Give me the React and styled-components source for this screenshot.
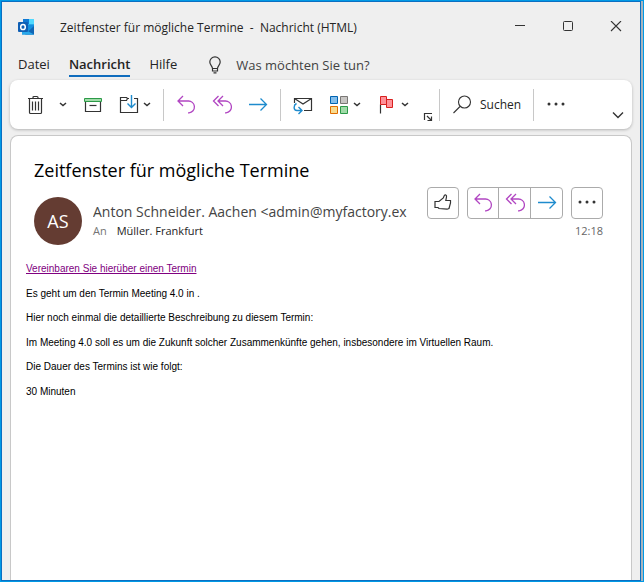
import React from "react";
import styled, { createGlobalStyle } from "styled-components";

const GlobalStyle = createGlobalStyle`
  * {
    box-sizing: border-box;
  }

  body {
    margin: 0;
    font-family: "Open Sans", "Noto Sans", sans-serif;
    color: #242424;
  }

  button {
    font: inherit;
    color: inherit;
    background: none;
    border: none;
    padding: 0;
    cursor: pointer;
  }

  svg {
    display: block;
    fill: none;
  }
`;

const PURPLE = "#b146c2";
const BLUE = "#1e8bcd";
const DARK = "#333333";

const OutlookLogo = () => (
  <svg width="16" height="16" viewBox="0 0 16 16">
    <path d="M5 0h11v10H5z" fill="#28a8ea" />
    <path d="M5 0h6v5H5z" fill="#0f78d4" />
    <path d="M11 0h5v5h-5z" fill="#50d9ff" />
    <path d="M4 6h12v9.5H4z" fill="#1490df" />
    <path d="M16 7v8.5H7z" fill="#1066b5" />
    <path d="M4 9l12 6.5H4z" fill="#28a8ea" />
    <rect y="3" width="10" height="10" rx="1" fill="#0f5fb4" />
    <ellipse cx="5" cy="8" rx="2.3" ry="2.6" stroke="#fff" strokeWidth="1.5" />
  </svg>
);

const BulbIcon = () => (
  <svg width="14" height="18" viewBox="0 0 14 18" stroke={DARK} strokeWidth="1.2">
    <path d="M4.5 12.5C4.5 10 1.8 9 1.8 6a5.2 5.2 0 0 1 10.4 0c0 3-2.7 4-2.7 6.5zM4.5 12.5V15h5v-2.5M5.5 16.8h3" />
  </svg>
);

const TrashIcon = () => (
  <svg width="20" height="20" viewBox="0 0 20 20" stroke={DARK} strokeWidth="1.2">
    <path d="M2 3.5h15M7 3.5v-1q0-1 1-1h3q1 0 1 1v1M3.5 3.5v14q0 1 1 1h10q1 0 1-1v-14M6.5 6.5v9M9.5 6.5v9M12.5 6.5v9" />
  </svg>
);

const ArchiveIcon = () => (
  <svg width="20" height="20" viewBox="0 0 20 20">
    <path d="M2.5 6.5v10h15v-10" stroke={DARK} strokeWidth="1.2" />
    <path d="M1.5 3.5h17v3h-17z" fill="#a0dba8" stroke="#2c9a48" />
    <path d="M6.5 10.5h7" stroke={DARK} strokeWidth="1.2" />
  </svg>
);

const MoveIcon = () => (
  <svg width="20" height="20" viewBox="0 0 20 20">
    <path
      d="M10 3.5H8.500L7.500 2.500h-6v15h17v-14H15M1.500 5.500h6l1-2"
      stroke={DARK}
      strokeWidth="1.2"
    />
    <path d="M12.5 0v12.500M8.500 8.500l4 4 4-4" stroke={BLUE} strokeWidth="1.4" />
  </svg>
);

const ReplyIcon = () => (
  <svg width="20" height="20" viewBox="0 0 20 20" stroke={PURPLE} strokeWidth="1.3">
    <path d="M7 1L2 6l5 5M2 6h10a5.900 5.900 0 0 1 1 11.800h-1" />
  </svg>
);

const ReplyAllIcon = () => (
  <svg width="20" height="20" viewBox="0 0 20 20" stroke={PURPLE} strokeWidth="1.3">
    <path d="M6.500 1l-5 5 5 5M11 1L6 6l5 5M6 6h7a5.900 5.900 0 0 1 1 11.800h-1" />
  </svg>
);

const ForwardIcon = () => (
  <svg width="20" height="20" viewBox="0 0 20 20" stroke={BLUE} strokeWidth="1.3">
    <path d="M1 9.5h17.500M12.500 3.500l6 6-6 6" />
  </svg>
);

const ShareMailIcon = () => (
  <svg width="20" height="20" viewBox="0 0 20 20">
    <path d="M1.5 8V3.500h17v12H11M1.500 3.500L10 9l8.500-5.500" stroke={DARK} strokeWidth="1.2" />
    <path
      d="M3.5 8.500C.5 10 0 15.500 4 15.500h4.500M5.500 12L9 15.500 5.500 19"
      stroke={BLUE}
      strokeWidth="1.4"
    />
  </svg>
);

const CategoriesIcon = () => (
  <svg width="20" height="20" viewBox="0 0 20 20">
    <path d="M1.5 1.5h7v7h-7z" fill="#83beec" stroke="#0063b1" />
    <path d="M11.5 1.5h7v7h-7z" fill="#c8c6c4" stroke="#797775" />
    <path d="M1.5 11.5h7v7h-7z" fill="#f8db8f" stroke="#e06c00" />
    <path d="M11.5 11.5h7v7h-7z" fill="#a0dba8" stroke="#2c9a48" />
  </svg>
);

const FlagIcon = () => (
  <svg width="20" height="20" viewBox="0 0 20 20">
    <path d="M3.5 9.5v9" stroke={DARK} strokeWidth="1.2" />
    <path d="M9.5 4.5h6v8h-6z" fill="#ff9199" stroke="#d8201f" />
    <path d="M3.5 1.5h6v8h-6z" fill="#ff9199" stroke="#d8201f" />
  </svg>
);

const SearchIcon = () => (
  <svg width="20" height="20" viewBox="0 0 20 20" stroke={DARK} strokeWidth="1.1">
    <circle cx="12.5" cy="7" r="6" />
    <path d="M8 11.5L1.500 18" />
  </svg>
);

const DotsIcon = () => (
  <svg width="20" height="20" viewBox="0 0 20 20">
    <circle cx="3" cy="9" r="1.5" fill={DARK} />
    <circle cx="10" cy="9" r="1.5" fill={DARK} />
    <circle cx="17" cy="9" r="1.5" fill={DARK} />
  </svg>
);

const LikeIcon = () => (
  <svg width="20" height="20" viewBox="0 0 20 20" stroke={DARK} strokeWidth="1.2">
    <path d="M2 8.5h4l4.300-3.500 1-2.500q.7-.9 1.500-.5 1 .5.700 2L12.800 7.500h4.700V10l-1.500 5.500-2 .7-8-.7-1-1H2z" />
  </svg>
);

const ChevronIcon = () => (
  <svg width="8" height="6" viewBox="0 0 8 6" stroke={DARK} strokeWidth="1.5">
    <path d="M1 1l3 2.500L7 1" />
  </svg>
);

const CollapseIcon = () => (
  <svg width="12" height="8" viewBox="0 0 12 8" stroke={DARK} strokeWidth="1.4">
    <path d="M1 1.5l5 5 5-5" />
  </svg>
);

const LauncherIcon = () => (
  <svg width="10" height="10" viewBox="0 0 10 10" stroke={DARK} strokeWidth="1.2">
    <path d="M1.5 8V1.500H9M4 4l4.500 4.500M8.500 4.500v4h-4" />
  </svg>
);

const MinimizeIcon = () => (
  <svg width="12" height="12" viewBox="0 0 12 12" stroke={DARK}>
    <path d="M1 4.5h10" />
  </svg>
);

const MaximizeIcon = () => (
  <svg width="12" height="12" viewBox="0 0 12 12" stroke={DARK}>
    <rect x="1.5" y="0.5" width="9" height="9" rx="1" />
  </svg>
);

const CloseIcon = () => (
  <svg width="12" height="12" viewBox="0 0 12 12" stroke={DARK} strokeWidth="1.1">
    <path d="M1 0l10 10M11 0L1 10" />
  </svg>
);

const App = () => {
  return (
    <Desktop>
      <GlobalStyle />
      <Window>
        <TitleBar>
          <OutlookLogo />
          <WindowTitle>
            Zeitfenster für mögliche Termine&nbsp; -&nbsp; Nachricht (HTML)
          </WindowTitle>
          <WindowControls>
            <button type="button" aria-label="Minimieren">
              <MinimizeIcon />
            </button>
            <button type="button" aria-label="Maximieren">
              <MaximizeIcon />
            </button>
            <button type="button" aria-label="Schließen">
              <CloseIcon />
            </button>
          </WindowControls>
        </TitleBar>

        <Tabs>
          <Tab type="button">Datei</Tab>
          <Tab type="button" $active>
            Nachricht
          </Tab>
          <Tab type="button">Hilfe</Tab>
          <TellMe type="button">
            <BulbIcon />
            Was möchten Sie tun?
          </TellMe>
        </Tabs>

        <Ribbon>
          <Group>
            <SplitButton type="button" aria-label="Löschen" $gap={13}>
              <TrashIcon />
              <ChevronIcon />
            </SplitButton>
            <button type="button" aria-label="Archivieren">
              <ArchiveIcon />
            </button>
            <SplitButton type="button" aria-label="Verschieben">
              <MoveIcon />
              <ChevronIcon />
            </SplitButton>
          </Group>
          <Divider />
          <Group>
            <button type="button" aria-label="Antworten">
              <ReplyIcon />
            </button>
            <button type="button" aria-label="Allen antworten">
              <ReplyAllIcon />
            </button>
            <button type="button" aria-label="Weiterleiten">
              <ForwardIcon />
            </button>
          </Group>
          <Divider />
          <Group>
            <button type="button" aria-label="Per E-Mail teilen">
              <ShareMailIcon />
            </button>
            <SplitButton type="button" aria-label="Kategorisieren">
              <CategoriesIcon />
              <ChevronIcon />
            </SplitButton>
            <SplitButton type="button" aria-label="Nachverfolgung">
              <FlagIcon />
              <ChevronIcon />
            </SplitButton>
          </Group>
          <Launcher type="button" aria-label="Kategorien-Optionen">
            <LauncherIcon />
          </Launcher>
          <Divider />
          <SearchButton type="button">
            <SearchIcon />
            Suchen
          </SearchButton>
          <Divider />
          <button type="button" aria-label="Weitere Befehle">
            <DotsIcon />
          </button>
          <Collapse type="button" aria-label="Menüband einblenden">
            <CollapseIcon />
          </Collapse>
        </Ribbon>

        <Message>
          <Subject>Zeitfenster für mögliche Termine</Subject>
          <Header>
            <Avatar>AS</Avatar>
            <People>
              <Sender>Anton Schneider. Aachen &lt;admin@myfactory.ex</Sender>
              <Recipient>
                <span>An</span>
                Müller. Frankfurt
              </Recipient>
            </People>
            <Side>
              <Actions>
                <ActionGroup>
                  <ActionButton type="button" aria-label="Gefällt mir">
                    <LikeIcon />
                  </ActionButton>
                </ActionGroup>
                <ActionGroup>
                  <ActionButton type="button" aria-label="Antworten">
                    <ReplyIcon />
                  </ActionButton>
                  <ActionButton type="button" aria-label="Allen antworten">
                    <ReplyAllIcon />
                  </ActionButton>
                  <ActionButton type="button" aria-label="Weiterleiten">
                    <ForwardIcon />
                  </ActionButton>
                </ActionGroup>
                <ActionGroup>
                  <ActionButton type="button" aria-label="Weitere Aktionen">
                    <DotsIcon />
                  </ActionButton>
                </ActionGroup>
              </Actions>
              <Time>12:18</Time>
            </Side>
          </Header>

          <Body>
            <p>
              <a href="#termin">Vereinbaren Sie hierüber einen Termin</a>
            </p>
            <p>Es geht um den Termin Meeting 4.0 in .</p>
            <p>Hier noch einmal die detaillierte Beschreibung zu diesem Termin:</p>
            <p>
              Im Meeting 4.0 soll es um die Zukunft solcher Zusammenkünfte gehen,
              insbesondere im Virtuellen Raum.
            </p>
            <p>Die Dauer des Termins ist wie folgt:</p>
            <p>30 Minuten</p>
          </Body>
        </Message>
      </Window>
    </Desktop>
  );
};

const Desktop = styled.div`
  display: flex;
  min-height: 100vh;
  padding-right: 2px;
  border: 1px solid #0099e5;
  background: #a9b4bd;
`;

const Window = styled.main`
  flex: 1;
  min-width: 0;
  display: flex;
  flex-direction: column;
  border: 1px solid #0a6fc2;
  background: #efefef;
`;

const TitleBar = styled.header`
  display: flex;
  align-items: center;
  height: 50px;
  padding: 0 18px 0 16px;
`;

const WindowTitle = styled.h1`
  margin: 0 0 0 26px;
  font-size: 12px;
  font-weight: 400;
  white-space: nowrap;
`;

const WindowControls = styled.div`
  display: flex;
  gap: 36px;
  margin-left: auto;
`;

const Tabs = styled.nav`
  display: flex;
  align-items: flex-end;
  gap: 19px;
  height: 28px;
  padding: 0 16px 3px;
`;

const Tab = styled.button`
  height: 24px;
  font-size: 13px;
  font-weight: ${({ $active }) => ($active ? 600 : 400)};
  border-bottom: 2px solid ${({ $active }) => ($active ? "#0f6cbd" : "transparent")};
`;

const TellMe = styled.button`
  display: flex;
  align-items: center;
  gap: 14px;
  height: 24px;
  margin-left: 12px;
  font-size: 13px;
  color: #424242;
`;

const Ribbon = styled.div`
  display: flex;
  align-items: center;
  height: 49px;
  margin: 0 8px;
  padding: 0 8px 0 16px;
  border-radius: 8px;
  background: #fff;
  box-shadow: 0 1px 3px rgba(0, 0, 0, 0.25);
`;

const Group = styled.div`
  display: flex;
  align-items: center;
  gap: 16px;
`;

const Divider = styled.span`
  width: 1px;
  height: 32px;
  margin: 0 12px;
  background: #c8c8c8;
`;

const SplitButton = styled.button`
  display: flex;
  align-items: center;
  gap: ${({ $gap = 4 }) => $gap}px;
`;

const Launcher = styled.button`
  align-self: flex-end;
  margin: 0 -6px 7px 14px;
`;

const SearchButton = styled.button`
  display: flex;
  align-items: center;
  gap: 8px;
  font-size: 12px;
`;

const Collapse = styled.button`
  align-self: flex-end;
  margin: 0 0 10px auto;
`;

const Message = styled.article`
  flex: 1;
  margin: 6px 8px 0;
  border: 1px solid #c8c8c8;
  border-bottom: none;
  border-radius: 8px 8px 0 0;
  background: #fff;
`;

const Subject = styled.h2`
  margin: 0;
  padding: 22px 23px 0;
  font-size: 18px;
  line-height: 24px;
  font-weight: 400;
  color: #000;
`;

const Header = styled.div`
  display: flex;
  padding: 5px 28px 0 23px;
`;

const Avatar = styled.div`
  display: flex;
  align-items: center;
  justify-content: center;
  flex: none;
  width: 48px;
  height: 48px;
  margin-top: 10px;
  border-radius: 50%;
  background: #643c32;
  color: #fff;
  font-size: 18px;
`;

const People = styled.div`
  flex: 1;
  min-width: 0;
  padding: 15px 20px 0 11px;
`;

const Sender = styled.div`
  overflow: hidden;
  font-size: 14px;
  line-height: 20px;
  white-space: nowrap;
  color: #444;
`;

const Recipient = styled.div`
  display: flex;
  gap: 10px;
  font-size: 11px;
  line-height: 18px;

  span {
    color: #757575;
  }
`;

const Side = styled.div`
  display: flex;
  flex-direction: column;
  align-items: flex-end;
`;

const Actions = styled.div`
  display: flex;
  gap: 8px;
`;

const ActionGroup = styled.div`
  display: flex;
  border: 1px solid #ababab;
  border-radius: 4px;
`;

const ActionButton = styled.button`
  display: flex;
  align-items: center;
  justify-content: center;
  width: 30px;
  height: 30px;

  & + & {
    width: 32px;
    border-left: 1px solid #ababab;
  }
`;

const Time = styled.time`
  margin-top: 4px;
  font-size: 11px;
  line-height: 16px;
  color: #666;
`;

const Body = styled.div`
  padding: 18px 15px;
  font-family: "Liberation Sans", Arial, sans-serif;
  font-size: 10px;
  line-height: 12px;
  color: #000;

  p {
    margin: 0 0 13px;
  }

  p:nth-child(even) {
    margin-bottom: 12px;
  }

  a {
    color: #800080;
  }
`;

export default App;
